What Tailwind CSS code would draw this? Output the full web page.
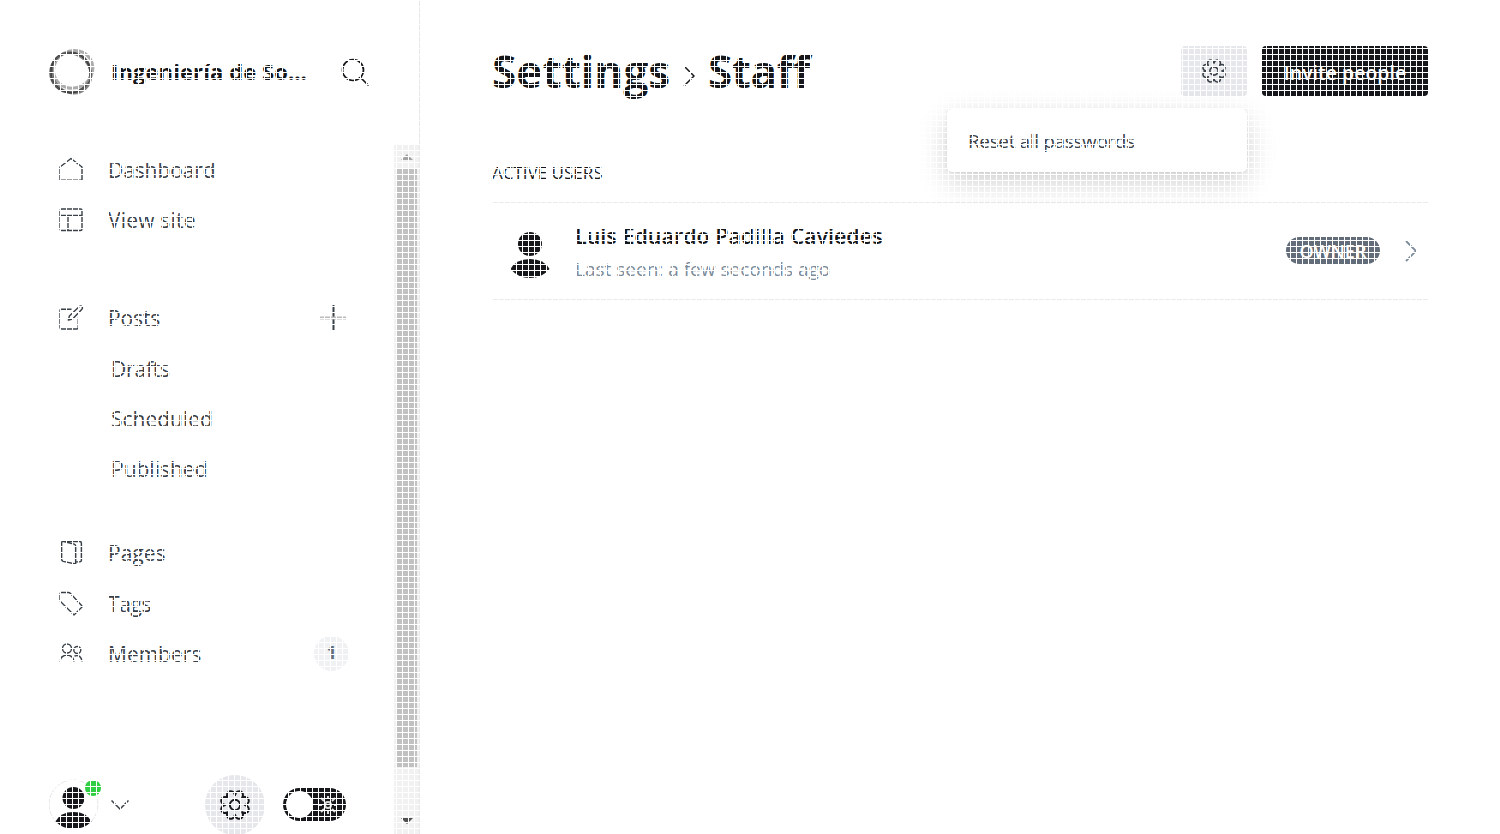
<!DOCTYPE html>
<html lang="en"><head><meta charset="utf-8"><title>Settings - Staff</title>
<script src="https://cdn.jsdelivr.net/npm/@tailwindcss/browser@4"></script></head>
<body class="relative w-[1500px] h-[834px] overflow-hidden bg-white flex font-['Open_Sans',sans-serif] text-[#15171a]">
<svg class="hidden"><symbol id="gear" viewBox="-16 -16 32 32" overflow="visible"><circle r="5.500"/><path stroke-linejoin="round" d="M0-10.500C1.900-18.200 11.600-14.300 7.600-7.600 14.300-11.600 18.200-1.900 10.500 0 18.200 1.900 14.300 11.600 7.600 7.600 11.600 14.300 1.900 18.200 0 10.500-1.900 18.200-11.600 14.300-7.600 7.600-14.300 11.600-18.200 1.900-10.500 0-18.200-1.900-14.300-11.600-7.600-7.600-11.600-14.300-1.900-18.200 0-10.500z"/></symbol></svg>
<aside class="w-[420px] h-full shrink-0 border-r border-[#e5e7ea] flex flex-col">
  <header class="h-[145px] shrink-0 pl-[48px] pt-[48px] flex items-start">
    <svg class="w-[48px] h-[48px]" viewBox="0 0 48 48" fill="none"><circle cx="22.500" cy="24.500" r="20" stroke="#555" stroke-width="2.500"/><ellipse cx="25.500" cy="21.500" rx="20" ry="18.500" stroke="#999" stroke-opacity=".8" stroke-width="3" transform="rotate(-30 25 22)"/><ellipse cx="23" cy="24" rx="21" ry="18.500" stroke="#333" stroke-opacity=".6" stroke-width="2.500" transform="rotate(50 22 25)"/></svg>
    <div class="ml-[15px] w-[230px] h-[48px] leading-[46px] text-[22px] font-bold whitespace-nowrap tracking-[0.1px]">Ingeniería de So…</div>
    <svg class="w-[28px] h-[28px] mt-[10px]" viewBox="0 0 28 28" fill="none" stroke="#15171a" stroke-width="1.700" stroke-linecap="round"><circle cx="12" cy="12" r="10.500"/><path d="M19.500 19.500L27 27"/></svg>
  </header>
  <div class="flex flex-1 min-h-0">
    <div class="w-[394px] flex flex-col text-[21px] leading-[32px] text-[#394047] whitespace-nowrap">
      <nav class="-mt-px h-[631px] shrink-0 pl-[59px] flex flex-col">
        <div class="h-[50px] flex items-center"><svg class="w-[24px] h-[25px] mr-[25px]" viewBox="0 0 24 24" fill="none" stroke="currentColor" stroke-width="1.400" stroke-linejoin="round"><path d="M1 9.500L12 1l11 8.500V22.800H1z"/></svg><span class="pt-px tracking-[-0.1px]">Dashboard</span></div>
        <div class="h-[50px] flex items-center"><svg class="w-[24px] h-[25px] mr-[25px]" viewBox="0 0 24 24" fill="none" stroke="currentColor" stroke-width="1.400"><rect x="1" y="1.500" width="22" height="21.500" rx="1.500"/><path d="M1 8h22M9 8v15"/></svg><span class="pt-px tracking-[0.2px]">View site</span></div>
        <div class="h-[50px] mt-[48px] flex items-center"><svg class="w-[25px] h-[25px] mr-[24px]" viewBox="0 0 24 24" fill="none" stroke="currentColor" stroke-width="1.400" stroke-linejoin="round"><path d="M12 4H2.500Q1 4 1 5.500V21.500Q1 23 2.500 23H17q1.500 0 1.500-1.500V12M9 14.500l1-4L19.500 1.500q1.500-1 2.500 0t0 2.500L13 13.500z"/></svg><span class="pt-px tracking-[-0.1px]">Posts</span><svg class="w-[28px] h-[28px] ml-auto mr-[47px] mt-[2px]" viewBox="0 0 28 28"><path d="M14.500 1v26" stroke="currentColor" stroke-width="2"/><path d="M1 14h26" stroke="#bbb" stroke-width="3"/></svg></div>
        <div class="h-[50px] pl-[52px] pt-px flex items-center mt-px tracking-[-0.2px]">Drafts</div>
        <div class="h-[50px] pl-[52px] pt-px flex items-center">Scheduled</div>
        <div class="h-[50px] pl-[52px] pt-px flex items-center">Published</div>
        <div class="h-[50px] mt-[34px] flex items-center"><svg class="w-[25px] h-[25px] mr-[24px]" viewBox="0 0 24 24" fill="none" stroke="currentColor" stroke-width="1.400" stroke-linejoin="round"><path d="M3 1.500H20q1.500 0 1.500 1.500V19.500q0 1.500-1.500 1.500H16M2.500 3q0-2 2-1.500L14.500 4q1.500.5 1.500 2V23L4 20.500q-1.500-.5-1.500-2z"/></svg><span class="pt-px">Pages</span></div>
        <div class="h-[50px] mt-px flex items-center"><svg class="w-[24px] h-[25px] mr-[25px]" viewBox="0 0 24 24" fill="none" stroke="currentColor" stroke-width="1.400" stroke-linejoin="round"><path d="M1 2.500Q1 1 2.500 1H9.500q1 0 2 1L23 14.500q.5.500 0 1L15.500 23q-.5.500-1 0L2 10.500q-1-1-1-2z"/></svg><span class="pt-px tracking-[-0.4px]">Tags</span></div>
        <div class="h-[50px] flex items-center"><svg class="w-[24px] h-[25px] mr-[25px]" viewBox="0 0 24 24" fill="none" stroke="currentColor" stroke-width="1.400"><circle cx="8" cy="7" r="4.500"/><circle cx="18.300" cy="8.500" r="3.500"/><path d="M1 20q.5-6 7-6.500 6.500.5 7 6.500M15.500 14.500q6.500-2 7.500 5.500"/></svg><span class="pt-px">Members</span><span class="ml-auto mr-[45px] size-[35px] rounded-full bg-[#eff1f3] flex items-center justify-center text-[17px] font-bold text-[#626d79]">1</span></div>
      </nav>
      <div class="h-[59px] pl-[48px] flex items-center">
        <div class="relative size-[52px] mt-[1px]">
          <svg class="size-[52px]" viewBox="0 0 52 52"><circle cx="25.500" cy="25.500" r="24.500" fill="none" stroke="#e5e7ea"/><g fill="#15171a"><circle cx="25.500" cy="19" r="11"/><path d="M7.500 42.500Q12 33 25.500 33t18 9.500Q36 50 25.500 50T7.500 42.500z"/></g></svg>
          <span class="absolute left-[37px] top-[1px] size-[16px] rounded-full bg-[#30cf43]"></span>
        </div>
        <svg class="w-[18px] h-[10px] ml-[11px]" viewBox="0 0 18 10" fill="none" stroke="#394047" stroke-width="1.500"><path d="M.5.5L9 9 17.500.5"/></svg>
        <div class="ml-[76px] size-[60px] rounded-full bg-[#e5e7ea] flex items-center justify-center"><svg class="size-[30px] overflow-visible" fill="none" stroke="#15171a" stroke-width="2.100"><use href="#gear"/></svg></div>
        <div class="ml-[18px] w-[63px] h-[33px] rounded-full bg-[#15171a] flex items-center justify-between pl-[3px] pr-[9px]"><span class="size-[27px] rounded-full bg-white"></span><svg class="size-[18px]" viewBox="0 0 18 18" fill="none" stroke="#fff" stroke-opacity=".85" stroke-width="2"><circle cx="9" cy="9" r="3"/><path d="M9 0v3M9 15v3M0 9h3M15 9h3M2 2l3 3M13 13l3 3M16 2l-3 3M5 13l-3 3"/></svg></div>
      </div>
    </div>
    <div class="w-[25px] bg-[#f1f1f1] flex flex-col items-center"><svg class="w-[12px] h-[6px] mt-[9px]" viewBox="0 0 12 6"><path d="M0 6L6 0l6 6z" fill="#a3a3a3"/></svg><div class="w-[20px] h-[599px] mt-[8px] bg-[#c1c1c1]"></div><svg class="w-[12px] h-[6px] mt-[51px]" viewBox="0 0 12 6"><path d="M0 0h12L6 6z" fill="#505050"/></svg></div>
  </div>
</aside>
<main class="flex-1 pl-[72px] pr-[72px] whitespace-nowrap">
  <header class="h-[146px] pt-[46px] flex items-start">
    <h1 class="h-[50px] flex items-center text-[44px] font-bold"><span class="w-[178px] leading-[50px] tracking-[0.1px]">Settings</span><svg class="w-[12px] h-[22px] ml-[13px] mr-[13px] mt-[10px]" viewBox="0 0 12 22" fill="none" stroke="#15171a" stroke-width="1.500"><path d="M1 1l10 10L1 21"/></svg><span class="leading-[50px] tracking-[-0.4px]">Staff</span></h1>
    <div class="relative ml-auto mr-[15px] w-[66px] h-[50px] rounded-[4px] bg-[#e5e7ea] flex items-center justify-center">
      <svg class="size-[24px] -mt-px overflow-visible" fill="none" stroke="#394047" stroke-width="2.100"><use href="#gear"/></svg>
      <div class="absolute right-0 top-[63px] w-[300px] h-[63px] pl-[21px] pt-[2px] rounded-[5px] bg-white flex items-center text-[19px] text-[#394047] tracking-[-0.37px] shadow-[0_0_2px_rgba(0,0,0,0.12),0_10px_30px_rgba(0,0,0,0.2)]">Reset all passwords</div>
    </div>
    <button class="w-[166px] h-[50px] rounded-[4px] bg-[#15171a] text-white text-[19.5px] font-semibold pt-[3px]">Invite people</button>
  </header>
  <h2 class="h-[57px] pt-[14px] border-b border-[#e9ebed] text-[17px] leading-[26px]">ACTIVE USERS</h2>
  <div class="h-[97px] border-b border-[#e9ebed] flex items-center">
    <svg class="w-[42px] h-[48px] ml-[17px] mt-[8px]" viewBox="0 0 42 48" fill="#15171a"><circle cx="21" cy="13" r="12"/><path d="M1.500 38Q7 28 21 28t19.500 10Q33 47 21 47T1.500 38z"/></svg>
    <div class="ml-[24px] mt-[3px]"><div class="h-[33px] leading-[31px] text-[21.5px] font-semibold">Luis Eduardo Padilla Caviedes</div><div class="h-[33px] leading-[33px] text-[19px] text-[#7c8b9a]">Last seen: a few seconds ago</div></div>
    <span class="ml-auto w-[94px] h-[27px] -mt-px rounded-full bg-[#626d79] text-white text-[18px] font-semibold leading-[29px] text-center">OWNER</span>
    <svg class="w-[12px] h-[22px] ml-[25px] mr-[11px]" viewBox="0 0 12 22" fill="none" stroke="#7c8b9a" stroke-width="1.800"><path d="M1 1l10 10L1 21"/></svg>
  </div>
</main>
<div class="absolute inset-0 pointer-events-none bg-[repeating-linear-gradient(to_right,#fff_0_1px,transparent_1px_6px),repeating-linear-gradient(to_bottom,#fff_0_1px,transparent_1px_6px)]"></div>
</body></html>
